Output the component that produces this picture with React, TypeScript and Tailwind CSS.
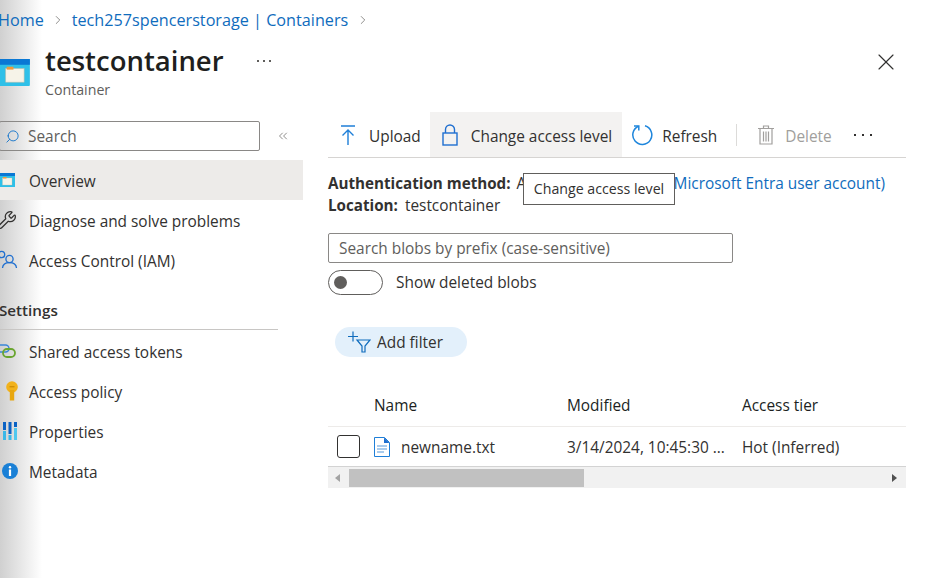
import { ChevronRight, ChevronsLeft, Search, X, Wrench } from "lucide-react";
import type { ReactNode } from "react";

const font = "font-['Open_Sans','Noto_Sans',sans-serif]";

function ContainerIcon({ className }: { className: string }) {
  return (
    <svg viewBox="0 0 36 28" className={className}>
      <rect x="0" y="0" width="36" height="28" rx="1" fill="#2fc0e8" />
      <rect x="0" y="0" width="36" height="6" fill="#0a78d4" />
      <rect x="11" y="10" width="19" height="14" fill="#f6f3e8" stroke="#c9c3ad" strokeWidth="0.6" />
      <rect x="12" y="8" width="7" height="3" fill="#f09a3a" />
    </svg>
  );
}

function Dots({ className, gap }: { className: string; gap: number }) {
  return (
    <svg viewBox="0 0 20 4" className={className} fill="currentColor">
      <rect x="0" y="1" width="2" height="2" />
      <rect x={gap} y="1" width="2" height="2" />
      <rect x={gap * 2} y="1" width="2" height="2" />
    </svg>
  );
}

function TokenIcon() {
  return (
    <svg viewBox="0 0 18 14" className="w-[18px] h-[14px]">
      <rect x="-3" y="1" width="12" height="7" rx="3.5" fill="none" stroke="#3a86d8" strokeWidth="1.5" />
      <rect x="3" y="5" width="12" height="8" rx="4" fill="none" stroke="#6aa52f" strokeWidth="1.8" />
    </svg>
  );
}

function PeopleIcon() {
  return (
    <svg viewBox="0 0 18 20" fill="none" stroke="#1f6fd0" strokeWidth="1.3" className="w-[18px] h-5">
      <circle cx="1.5" cy="4.5" r="3.2" />
      <circle cx="9.5" cy="9" r="3.6" />
      <path d="M2.5 18c.3-3.5 3-5.3 7-5.3s6.7 1.8 7 5.3" />
    </svg>
  );
}

function KeyIcon() {
  return (
    <svg viewBox="0 0 12 20" className="w-3 h-5">
      <circle cx="6" cy="6" r="5.8" fill="#f2b21b" />
      <rect x="3.8" y="9" width="4.4" height="10.5" fill="#e8a70f" />
      <rect x="3.5" y="5" width="5" height="1.4" fill="#d08f06" />
    </svg>
  );
}

function PropertiesIcon() {
  return (
    <svg viewBox="0 0 15 18" className="w-[15px] h-[18px]">
      <rect x="0" y="0" width="3" height="8" fill="#0a62c4" />
      <rect x="0" y="9" width="3" height="9" fill="#3bb8e8" />
      <rect x="5.5" y="0" width="3" height="12" fill="#0a62c4" />
      <rect x="5.5" y="13" width="3" height="5" fill="#3bb8e8" />
      <rect x="11" y="0" width="3" height="5" fill="#0a62c4" />
      <rect x="11" y="6" width="3" height="12" fill="#50c8ee" />
    </svg>
  );
}

function InfoIcon() {
  return (
    <svg viewBox="0 0 16 16" className="w-4 h-4">
      <circle cx="8" cy="8" r="8" fill="#1a80d6" />
      <circle cx="8" cy="4.2" r="1.2" fill="#fff" />
      <rect x="6.9" y="6.5" width="2.2" height="6.5" fill="#fff" />
    </svg>
  );
}

function NavRow({ icon, label, active, iconPad = "pr-[11px]" }: { icon: ReactNode; label: string; active?: boolean; iconPad?: string }) {
  return (
    <div className={`flex items-center h-10 ${active ? "bg-[#edebe9]" : ""}`}>
      <div className={`w-[29px] h-full flex items-center justify-end shrink-0 ${iconPad}`}>{icon}</div>
      <span className="text-[15.4px] leading-[22px] pt-[4px] text-[#323130]">{label}</span>
    </div>
  );
}

function Sidebar() {
  return (
    <aside className="w-[303px] shrink-0">
      <div className="flex items-center h-[30px] mb-[9px]">
        <div className="w-[261px] h-[30px] -ml-px border border-[#8a8886] rounded-[2px] flex items-center pl-[5px] gap-[8px]">
          <Search size={15} strokeWidth={1.4} className="text-[#0a6fc9] -scale-x-100" />
          <span className="text-[15.4px] leading-[22px] pt-[2px] text-[#605e5c]">Search</span>
        </div>
        <ChevronsLeft size={14} strokeWidth={1.2} className="text-[#605e5c] ml-[16px]" />
      </div>
      <NavRow active label="Overview" iconPad="pr-[14px]" icon={<ContainerIcon className="w-[18px] h-[14px] shrink-0" />} />
      <NavRow label="Diagnose and solve problems" iconPad="pr-[12px]" icon={<Wrench size={20} strokeWidth={1.5} className="text-[#323130] shrink-0" />} />
      <NavRow label="Access Control (IAM)" icon={<PeopleIcon />} />
      <div className="w-[278px] h-[50px] border-b border-[#c8c6c4] flex items-center pt-[12px]">
        <span className="text-[15.2px] font-semibold text-[#323130] -ml-px">Settings</span>
      </div>
      <div className="mt-px">
        <NavRow label="Shared access tokens" icon={<TokenIcon />} />
        <NavRow label="Access policy" icon={<KeyIcon />} />
        <NavRow label="Properties" icon={<PropertiesIcon />} />
        <NavRow label="Metadata" icon={<InfoIcon />} />
      </div>
    </aside>
  );
}

function ToolbarButton({ icon, label, active, disabled }: { icon: ReactNode; label: string; active?: boolean; disabled?: boolean }) {
  return (
    <div className={`flex items-center h-full ${active ? "bg-[#f3f2f1] pr-[10px]" : ""}`}>
      {icon}
      <span className={`text-[15.4px] leading-[22px] pt-[4px] ${disabled ? "text-[#a19f9d]" : "text-[#323130]"}`}>{label}</span>
    </div>
  );
}

function Toolbar() {
  return (
    <div className="relative h-[46px] border-b border-[#d6d4d2] flex items-center whitespace-nowrap">
      <ToolbarButton
        label="Upload"
        icon={
          <svg viewBox="0 0 18 22" fill="none" stroke="#1f7fd8" strokeWidth="1.4" className="w-[18px] h-[22px] ml-[11px] mr-[12px]">
            <path d="M2 2h14M9 21V6M3.5 11.5 9 6l5.5 5.5" />
          </svg>
        }
      />
      <div className="w-[9px]" />
      <ToolbarButton
        active
        label="Change access level"
        icon={
          <svg viewBox="0 0 16 22" fill="none" stroke="#1f6fd0" strokeWidth="1.4" className="w-4 h-[22px] ml-[12px] mr-[13px]">
            <rect x="1" y="9" width="14" height="12" />
            <path d="M3.5 9V5.5a4.5 4.5 0 0 1 9 0V9" />
          </svg>
        }
      />
      <ToolbarButton
        label="Refresh"
        icon={
          <svg viewBox="0 0 22 22" fill="none" stroke="#1f86dc" strokeWidth="1.5" className="w-[22px] h-[22px] ml-[9px] mr-[9px]">
            <path d="M7.5 2.2A9.5 9.5 0 1 0 14 1.8" />
            <path d="M7.8 6.5V2H3" />
          </svg>
        }
      />
      <div className="w-px h-[22px] bg-[#dcdbd9] ml-[19px]" />
      <ToolbarButton
        disabled
        label="Delete"
        icon={
          <svg viewBox="0 0 16 20" fill="none" stroke="#a19f9d" strokeWidth="1.2" className="w-4 h-5 ml-[21px] mr-[11px]">
            <path d="M0 3.5h16M5.5 3.5V1h5v2.5M2 3.5V19h12V3.5M5.5 6.5v10M8 6.5v10M10.5 6.5v10" />
          </svg>
        }
      />
      <Dots gap={8} className="w-5 h-1 ml-[22px] text-[#323130] shrink-0" />
    </div>
  );
}

function BlobTable() {
  return (
    <div className="mt-[29px]">
      <div className="flex items-center h-[41px] border-b border-[#edebe9] text-[15.4px] font-medium text-[#201f1e]">
        <span className="w-[239px] pl-[46px]">Name</span>
        <span className="w-[175px]">Modified</span>
        <span>Access tier</span>
      </div>
      <div className="flex items-center h-[39px] text-[15.4px] text-[#323130]">
        <div className="w-[46px] pl-[9px]">
          <div className="w-[23px] h-[23px] border border-[#323130] rounded-[3px]" />
        </div>
        <svg viewBox="0 0 16 20" className="w-4 h-5 mr-[11px]">
          <path d="M.5.5h10l5 5v14H.5z" fill="#fff" stroke="#1f7fd8" />
          <path d="M10 .5v5.5h5.5z" fill="#1f6fd0" />
          <path d="M3 9h10M3 12h10M3 15h7" stroke="#8fbce8" strokeWidth="1.4" />
        </svg>
        <span className="w-[166px] pt-[2px]">newname.txt</span>
        <span className="w-[175px] pt-[2px] whitespace-nowrap overflow-hidden">3/14/2024, 10:45:30 ...</span>
        <span className="pt-[2px]">Hot (Inferred)</span>
      </div>
      <div className="h-[22px] border-t border-[#d3d3d3] bg-[#f1f1f1] flex items-center pl-[7px] pr-[9px]">
        <div className="w-0 h-0 border-y-[4px] border-y-transparent border-r-[5px] border-r-[#a3a3a3]" />
        <div className="w-[235px] h-[18px] bg-[#c1c1c1] ml-[9px]" />
        <div className="flex-1" />
        <div className="w-0 h-0 border-y-[4px] border-y-transparent border-l-[5px] border-l-[#505050]" />
      </div>
    </div>
  );
}

function Main() {
  return (
    <main className="relative w-[578px] ml-[25px] -mt-[9px]">
      <Toolbar />
      <div className="text-[15.4px] leading-[22px] text-[#323130] mt-[14px]">
        <div className="flex items-baseline h-[22px] whitespace-nowrap">
          <span className="font-bold text-[15.2px] mr-[6px]">Authentication method:</span>
          <span>A</span>
          <span className="ml-auto mr-[21px] text-[#0f6cbd]">Microsoft Entra user account)</span>
        </div>
        <div className="flex items-baseline h-[22px]">
          <span className="font-bold text-[15.2px] mr-[7px]">Location:</span>
          <span>testcontainer</span>
        </div>
      </div>
      {/* tooltip over the auth line */}
      <div className="absolute left-[195px] top-[61px] w-[152px] h-[32px] bg-white border border-[#605e5c] flex items-center justify-center text-[14.2px] text-[#323130] whitespace-nowrap">
        Change access level
      </div>
      <div className="w-[405px] h-[30px] mt-[17px] border border-[#8a8886] rounded-[2px] flex items-center pl-[10px] text-[15.4px] leading-[22px] text-[#605e5c]">
        <span className="pt-[2px]">Search blobs by prefix (case-sensitive)</span>
      </div>
      <div className="flex items-center mt-[7px] h-[25px]">
        <div className="w-[55px] h-[25px] border border-[#605e5c] rounded-full flex items-center pl-[5px]">
          <div className="w-[13px] h-[13px] rounded-full bg-[#605e5c]" />
        </div>
        <span className="ml-[13px] text-[15.4px] text-[#323130]">Show deleted blobs</span>
      </div>
      <div className="mt-[32px] ml-[7px] w-[132px] h-[30px] rounded-full bg-[#e3f0fb] flex items-center pl-[13px] gap-[6px]">
        <svg viewBox="0 0 23 22" fill="none" stroke="#0f6cbd" strokeWidth="1.2" className="w-[23px] h-[22px]">
          <path d="M0 5.5h10M5 .5v10M9 9h13l-5 6v6h-3v-6z" />
        </svg>
        <span className="text-[15.4px] leading-[22px] pt-[2px] text-[#323130]">Add filter</span>
      </div>
      <BlobTable />
    </main>
  );
}

export default function App() {
  return (
    <div className={`relative w-[930px] h-[578px] overflow-hidden bg-white ${font}`}>
      {/* blade shadow along the left edge, behind the content */}
      <div className="absolute inset-y-0 left-0 w-[42px] bg-gradient-to-r from-[#d0d0d0] to-white pointer-events-none" />
      <div className="relative">
        <div className="flex items-center h-10 -ml-[2px] text-[16.2px] text-[#0f6cbd] gap-[7px] whitespace-nowrap">
          <span>Home</span>
          <ChevronRight size={14} strokeWidth={1.2} className="text-[#605e5c]" />
          <span>tech257spencerstorage | Containers</span>
          <ChevronRight size={14} strokeWidth={1.2} className="text-[#605e5c] ml-[1px]" />
        </div>
        <header className="flex items-start h-[81px] pt-[2px]">
          <ContainerIcon className="w-[37px] h-[27px] -ml-[6px] mt-[17px] shrink-0" />
          <div className="ml-[14px]">
            <h1 className="text-[27.5px] leading-[38px] font-semibold text-[#201f1e]">testcontainer</h1>
            <div className="text-[14.2px] leading-[20px] text-[#605e5c]">Container</div>
          </div>
          <Dots gap={6} className="w-5 h-1 ml-[33px] mt-[17px] text-[#605e5c] shrink-0" />
          <div className="flex-1" />
          <X size={28} strokeWidth={1} className="text-[#323130] mr-[30px] mt-[6px]" />
        </header>
        <div className="flex">
          <Sidebar />
          <Main />
        </div>
      </div>
    </div>
  );
}
